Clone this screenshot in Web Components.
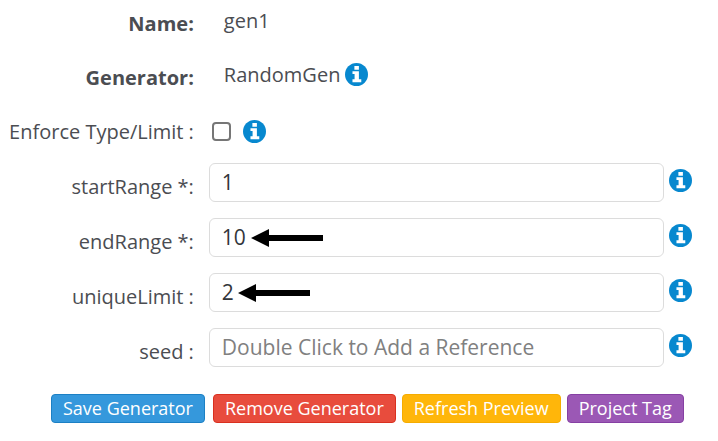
<!DOCTYPE html>
<html lang="en">
<head>
<meta charset="utf-8">
<meta name="viewport" content="width=device-width, initial-scale=1">
<title>Generator</title>
<style>
  body {
    margin: 0;
    background: #fff;
    color: #4b4d52;
    font-family: "Open Sans", "Noto Sans", sans-serif;
    font-size: 20px;
    line-height: 28px;
  }
</style>
</head>
<body>

<generator-form>
  <form-row label="Name:" strong>gen1</form-row>
  <form-row label="Generator:" strong>RandomGen <info-icon></info-icon></form-row>
  <check-field label="Enforce Type/Limit :"></check-field>
  <text-field label="startRange *:" value="1"></text-field>
  <text-field label="endRange *:" value="10"><arrow-mark slot="mark" style="--start: 42px"></arrow-mark></text-field>
  <text-field label="uniqueLimit :" value="2"><arrow-mark slot="mark" style="--start: 29px"></arrow-mark></text-field>
  <text-field label="seed :" placeholder="Double Click to Add a Reference"></text-field>

  <action-button slot="main-action" kind="save">Save Generator</action-button>
  <action-button slot="actions" kind="remove">Remove Generator</action-button>
  <action-button slot="actions" kind="refresh">Refresh Preview</action-button>
  <action-button slot="actions" kind="tag">Project Tag</action-button>
</generator-form>

<script>
// shared by every kind of row: label column on the left, content on the right
const rowStyles = `
  :host {
    display: grid;
    grid-template-columns: 27% minmax(0, 1fr);
    column-gap: 15px;
    align-items: center;
    min-height: 38px;
  }

  .label {
    padding-top: 8px;
    text-align: right;
    white-space: nowrap;
  }
`;

function render(element, html) {
  const template = document.createElement("template");
  template.innerHTML = html;
  element.attachShadow({ mode: "open" });
  element.shadowRoot.appendChild(template.content.cloneNode(true));
}

customElements.define(
  "info-icon",
  class extends HTMLElement {
    connectedCallback() {
      render(this, `
        <svg viewBox="0 0 24 24" aria-hidden="true">
          <circle cx="12" cy="12" r="12" fill="#0788cf"/>
          <path fill="#fff" d="M9.800 3h4.700v4h-4.700zM7.800 8.500h6.700v8.500h2.500v3h-9.200v-3h2.200v-5.500h-2.200z"/>
        </svg>

        <style>
          :host {
            display: inline-block;
            width: 23px;
            height: 23px;
            flex: none;
          }

          svg {
            display: block;
            width: 100%;
            height: 100%;
          }
        </style>
      `);
    }
  }
);

customElements.define(
  "arrow-mark",
  class extends HTMLElement {
    connectedCallback() {
      render(this, `
        <svg viewBox="0 0 72 18" aria-hidden="true">
          <path d="M0 9 18 0v6h54v6H18v6z"/>
        </svg>

        <style>
          /* lies over the input, just after its value */
          :host {
            position: absolute;
            left: var(--start);
            top: 11px;
            width: 72px;
            height: 18px;
            pointer-events: none;
          }

          svg {
            display: block;
          }
        </style>
      `);
    }
  }
);

customElements.define(
  "form-row",
  class extends HTMLElement {
    connectedCallback() {
      render(this, `
        <div class="label">${this.getAttribute("label")}</div>
        <div class="value"><slot></slot></div>

        <style>
          ${rowStyles}

          :host([strong]) .label {
            font-weight: 700;
          }

          .value {
            display: flex;
            align-items: center;
            gap: 5px;
            padding: 2px 0 0 15px;
          }

          ::slotted(info-icon) {
            margin-bottom: 2px;
          }
        </style>
      `);
    }
  }
);

customElements.define(
  "check-field",
  class extends HTMLElement {
    connectedCallback() {
      render(this, `
        <label class="label" for="check">${this.getAttribute("label")}</label>
        <div class="control">
          <input type="checkbox" id="check">
          <info-icon></info-icon>
        </div>

        <style>
          ${rowStyles}

          .control {
            display: flex;
            align-items: center;
            gap: 12px;
            padding: 6px 0 0 3px;
          }

          input {
            appearance: none;
            box-sizing: border-box;
            width: 19px;
            height: 19px;
            margin: 0;
            border: 2px solid #767676;
            border-radius: 4px;
            background: #fff;
          }

          input:checked {
            background: #0788cf;
          }
        </style>
      `);
    }
  }
);

customElements.define(
  "text-field",
  class extends HTMLElement {
    connectedCallback() {
      const value = this.getAttribute("value") || "";
      const placeholder = this.getAttribute("placeholder") || "";

      render(this, `
        <label class="label" for="field">${this.getAttribute("label")}</label>
        <div class="control">
          <div class="box">
            <input type="text" id="field" value="${value}" placeholder="${placeholder}">
            <slot name="mark"></slot>
          </div>
          <info-icon></info-icon>
        </div>

        <style>
          ${rowStyles}

          .control {
            display: flex;
            align-items: center;
            gap: 5px;
            padding-right: 26px;
          }

          .box {
            position: relative;
            flex: 1;
          }

          input {
            display: block;
            box-sizing: border-box;
            width: 100%;
            height: 39px;
            padding: 0 12px 2px;
            border: 1px solid #dcdcdc;
            border-radius: 6px;
            background: #fff;
            color: #33363b;
            font: inherit;
            font-size: 21px;
          }

          input::placeholder {
            color: #808080;
            opacity: 1;
          }

          info-icon {
            margin-bottom: 4px;
          }
        </style>
      `);
    }
  }
);

customElements.define(
  "action-button",
  class extends HTMLElement {
    connectedCallback() {
      render(this, `
        <button type="button"><slot></slot></button>

        <style>
          :host {
            display: block;
            --fill: #3598dc;
            --edge: #1c80c4;
          }

          :host([kind="remove"]) {
            --fill: #e84c3d;
            --edge: #d9301f;
          }

          :host([kind="refresh"]) {
            --fill: #ffb60a;
            --edge: #f5ac00;
          }

          :host([kind="tag"]) {
            --fill: #9b58b5;
            --edge: #8640a3;
          }

          button {
            display: block;
            box-sizing: border-box;
            height: 29px;
            padding: 0 11px;
            border: 1px solid var(--edge);
            border-radius: 4px;
            background: var(--fill);
            color: #fff;
            font: inherit;
            font-size: 18px;
            line-height: 27px;
            white-space: nowrap;
            cursor: pointer;
          }
        </style>
      `);
    }
  }
);

customElements.define(
  "generator-form",
  class extends HTMLElement {
    connectedCallback() {
      render(this, `
        <form>
          <slot></slot>
          <div class="actions">
            <slot name="main-action"></slot>
            <div class="group"><slot name="actions"></slot></div>
          </div>
        </form>

        <style>
          :host {
            display: block;
          }

          form {
            display: flex;
            flex-direction: column;
            gap: 16px;
            padding-top: 1px;
          }

          .actions {
            display: flex;
            gap: 8px;
            padding: 11px 0 0 51px;
          }

          .group {
            display: flex;
            gap: 6px;
          }
        </style>
      `);
    }
  }
);
</script>
</body>
</html>
